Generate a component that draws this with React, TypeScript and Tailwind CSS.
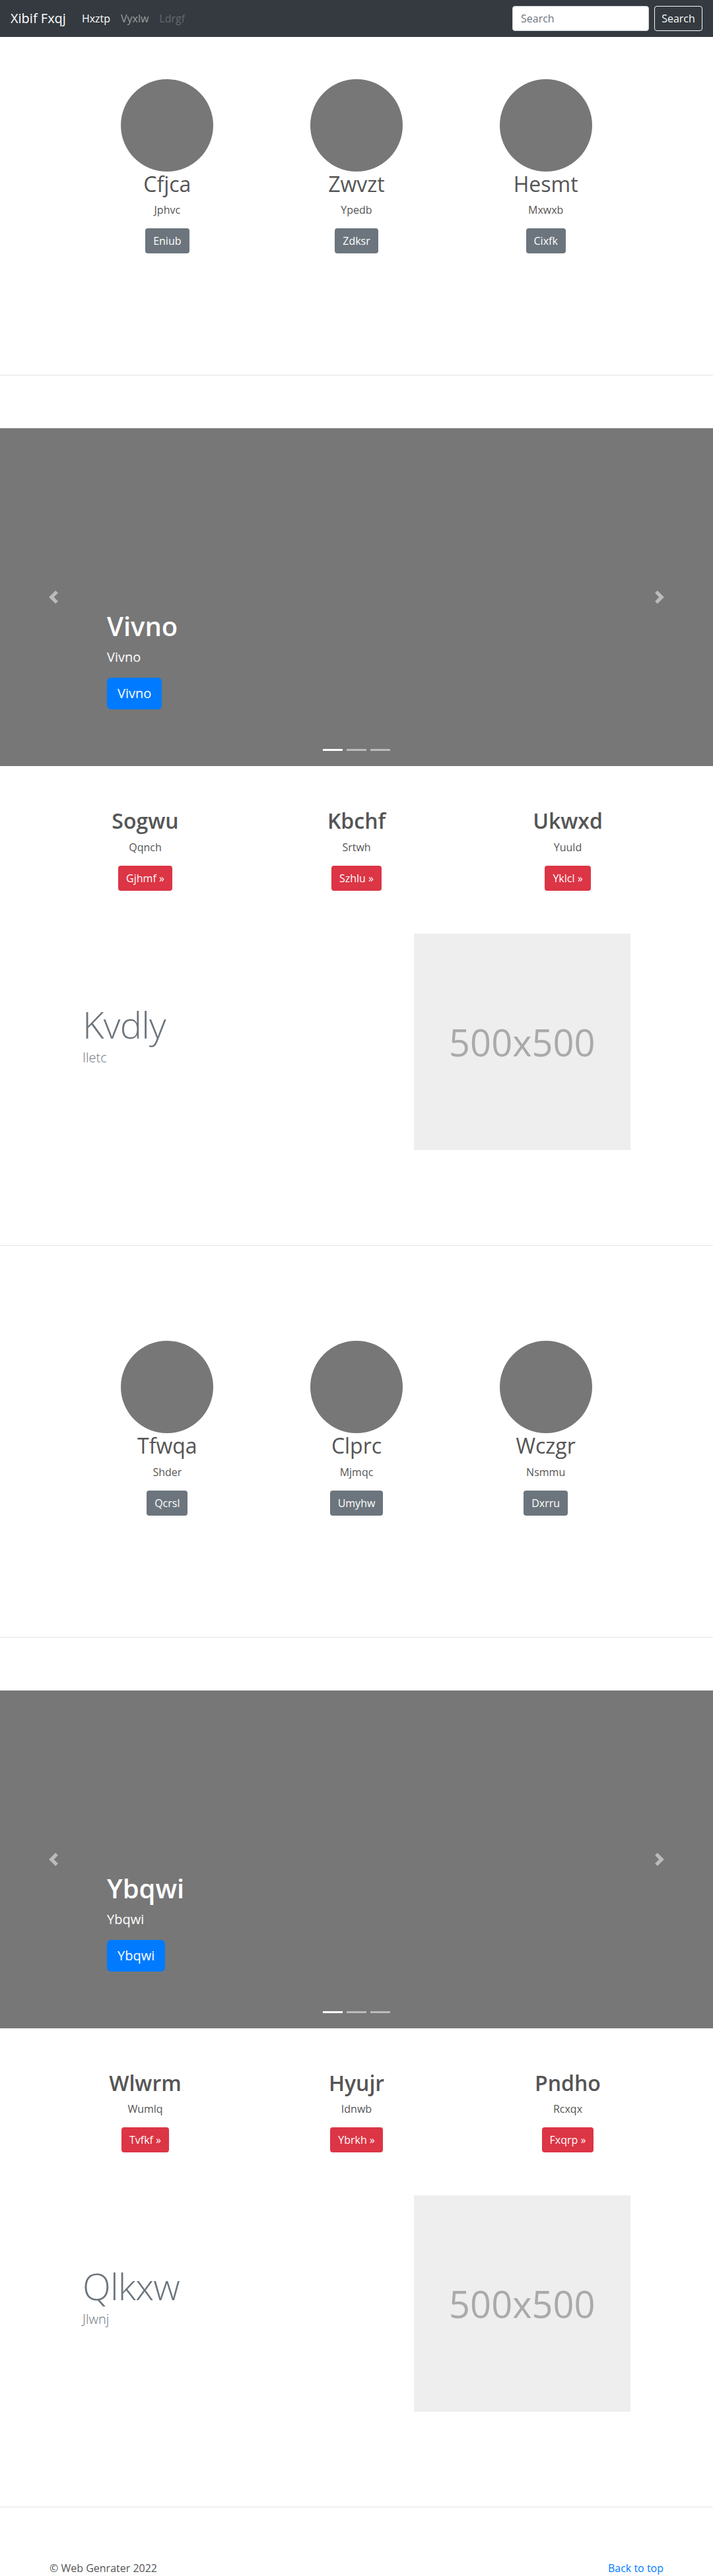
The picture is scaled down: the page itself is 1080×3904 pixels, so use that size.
import React from 'react'

interface Person {
  name: string
  sub: string
  btn: string
}

interface Feature {
  title: string
  sub: string
  btn: string
}

interface Block {
  people: Person[]
  slide: string
  features: Feature[]
  featTitle: string
  featSub: string
}

const blocks: Block[] = [
  {
    people: [
      { name: 'Cfjca', sub: 'Jphvc', btn: 'Eniub' },
      { name: 'Zwvzt', sub: 'Ypedb', btn: 'Zdksr' },
      { name: 'Hesmt', sub: 'Mxwxb', btn: 'Cixfk' },
    ],
    slide: 'Vivno',
    features: [
      { title: 'Sogwu', sub: 'Qqnch', btn: 'Gjhmf' },
      { title: 'Kbchf', sub: 'Srtwh', btn: 'Szhlu' },
      { title: 'Ukwxd', sub: 'Yuuld', btn: 'Yklcl' },
    ],
    featTitle: 'Kvdly',
    featSub: 'Iletc',
  },
  {
    people: [
      { name: 'Tfwqa', sub: 'Shder', btn: 'Qcrsl' },
      { name: 'Clprc', sub: 'Mjmqc', btn: 'Umyhw' },
      { name: 'Wczgr', sub: 'Nsmmu', btn: 'Dxrru' },
    ],
    slide: 'Ybqwi',
    features: [
      { title: 'Wlwrm', sub: 'Wumlq', btn: 'Tvfkf' },
      { title: 'Hyujr', sub: 'Idnwb', btn: 'Ybrkh' },
      { title: 'Pndho', sub: 'Rcxqx', btn: 'Fxqrp' },
    ],
    featTitle: 'Qlkxw',
    featSub: 'Jlwnj',
  },
]

function Navbar() {
  return (
    <nav className="flex h-14 items-center justify-between bg-[#343a40] px-4">
      <div className="flex items-center">
        <span className="mr-4 text-xl leading-[30px] text-white">Xibif Fxqj</span>
        <a className="px-2 leading-6 text-white">Hxztp</a>
        <a className="px-2 leading-6 text-white/50">Vyxlw</a>
        <a className="px-2 leading-6 text-white/25">Ldrgf</a>
      </div>
      <div className="flex items-center gap-2">
        <input
          placeholder="Search"
          className="h-[38px] w-[207px] rounded border border-[#ced4da] bg-white px-3 leading-6 text-[#495057] placeholder:text-[#6c757d]"
        />
        <button className="h-[38px] w-[73px] rounded border border-[#f8f9fa] leading-6 text-[#f8f9fa]">
          Search
        </button>
      </div>
    </nav>
  )
}

function Circles({ people }: { people: Person[] }) {
  return (
    <section className="py-16">
      <div className="mx-auto grid w-[860px] grid-cols-3">
        {people.map((p) => (
          <div key={p.name} className="mb-6 flex flex-col items-center text-center">
            <div className="h-[140px] w-[140px] rounded-full bg-[#777]" />
            <h2 className="mb-2 text-[32px] leading-[1.2] text-[#555]">{p.name}</h2>
            <p className="mb-4 leading-6 text-[#555]">{p.sub}</p>
            <p className="mb-4">
              <button className="h-[38px] rounded bg-[#6c757d] px-3 leading-6 text-white">{p.btn}</button>
            </p>
          </div>
        ))}
      </div>
    </section>
  )
}

function Chevron({ dir }: { dir: 'left' | 'right' }) {
  return (
    <svg viewBox="0 0 8 8" className="h-5 w-5 fill-white opacity-50">
      {dir === 'left' ? (
        <path d="M5.25 0l-4 4 4 4 1.5-1.5L4.25 4l2.5-2.5L5.25 0z" />
      ) : (
        <path d="M2.75 0l-1.5 1.5L3.75 4l-2.5 2.5L2.75 8l4-4-4-4z" />
      )}
    </svg>
  )
}

function Carousel({ label }: { label: string }) {
  return (
    <div className="relative mb-16 h-[512px] bg-[#777]">
      <div className="absolute inset-y-0 left-0 flex w-[15%] items-center justify-center">
        <Chevron dir="left" />
      </div>
      <div className="absolute inset-y-0 right-0 flex w-[15%] items-center justify-center">
        <Chevron dir="right" />
      </div>
      <div className="absolute bottom-[50px] left-[15%] right-[15%] pb-5 text-left text-white">
        <h1 className="mb-2 text-[40px] font-semibold leading-[1.2]">{label}</h1>
        <p className="mb-4 text-xl leading-[30px]">{label}</p>
        <p className="mb-4">
          <button className="h-12 rounded-md bg-[#007bff] px-4 text-xl leading-[30px] text-white">{label}</button>
        </p>
      </div>
      <div className="absolute bottom-[23px] left-0 right-0 flex justify-center gap-1.5">
        <span className="h-[3px] w-[30px] bg-white" />
        <span className="h-[3px] w-[30px] bg-white/50" />
        <span className="h-[3px] w-[30px] bg-white/50" />
      </div>
    </div>
  )
}

function Features({ items }: { items: Feature[] }) {
  return (
    <div className="mx-auto grid w-[960px] grid-cols-3">
      {items.map((f) => (
        <div key={f.title} className="flex flex-col items-center px-[15px] text-center">
          <h2 className="mb-2 text-[32px] font-semibold leading-[1.2] text-[#555]">{f.title}</h2>
          <p className="mb-4 leading-6 text-[#555]">{f.sub}</p>
          <button className="h-[38px] rounded bg-[#dc3545] px-3 leading-6 text-white">{f.btn} »</button>
        </div>
      ))}
    </div>
  )
}

function Featurette({ title, sub }: { title: string; sub: string }) {
  return (
    <section className="pb-16">
      <div className="mx-auto mt-[65px] grid w-[860px] grid-cols-12">
        <div className="col-span-7 px-[15px]">
          <h2 className="mb-2 mt-[109px] text-[56px] font-light leading-none tracking-[-0.8px] text-[#6c757d]">
            {title}
          </h2>
          <p className="text-xl font-light leading-[30px] text-[#6c757d]">{sub}</p>
        </div>
        <div className="col-span-5 px-[15px]">
          <div className="flex aspect-square w-full items-center justify-center bg-[#eee] text-[56px] text-[#aaa]">
            500x500
          </div>
        </div>
      </div>
    </section>
  )
}

export default function App() {
  return (
    <div className="min-h-[3904px] bg-white font-['Open_Sans','Noto_Sans',sans-serif] text-base">
      <Navbar />
      {blocks.map((b) => (
        <div key={b.slide}>
          <Circles people={b.people} />
          <hr className="my-20 border-t border-[#e5e5e5]" />
          <Carousel label={b.slide} />
          <Features items={b.features} />
          <Featurette title={b.featTitle} sub={b.featSub} />
          <hr className="my-20 border-t border-[#e5e5e5]" />
        </div>
      ))}
      <footer className="mx-auto flex w-[960px] justify-between px-[15px] leading-6">
        <p className="text-[#555]">© Web Genrater 2022</p>
        <a className="text-[#007bff]">Back to top</a>
      </footer>
    </div>
  )
}
